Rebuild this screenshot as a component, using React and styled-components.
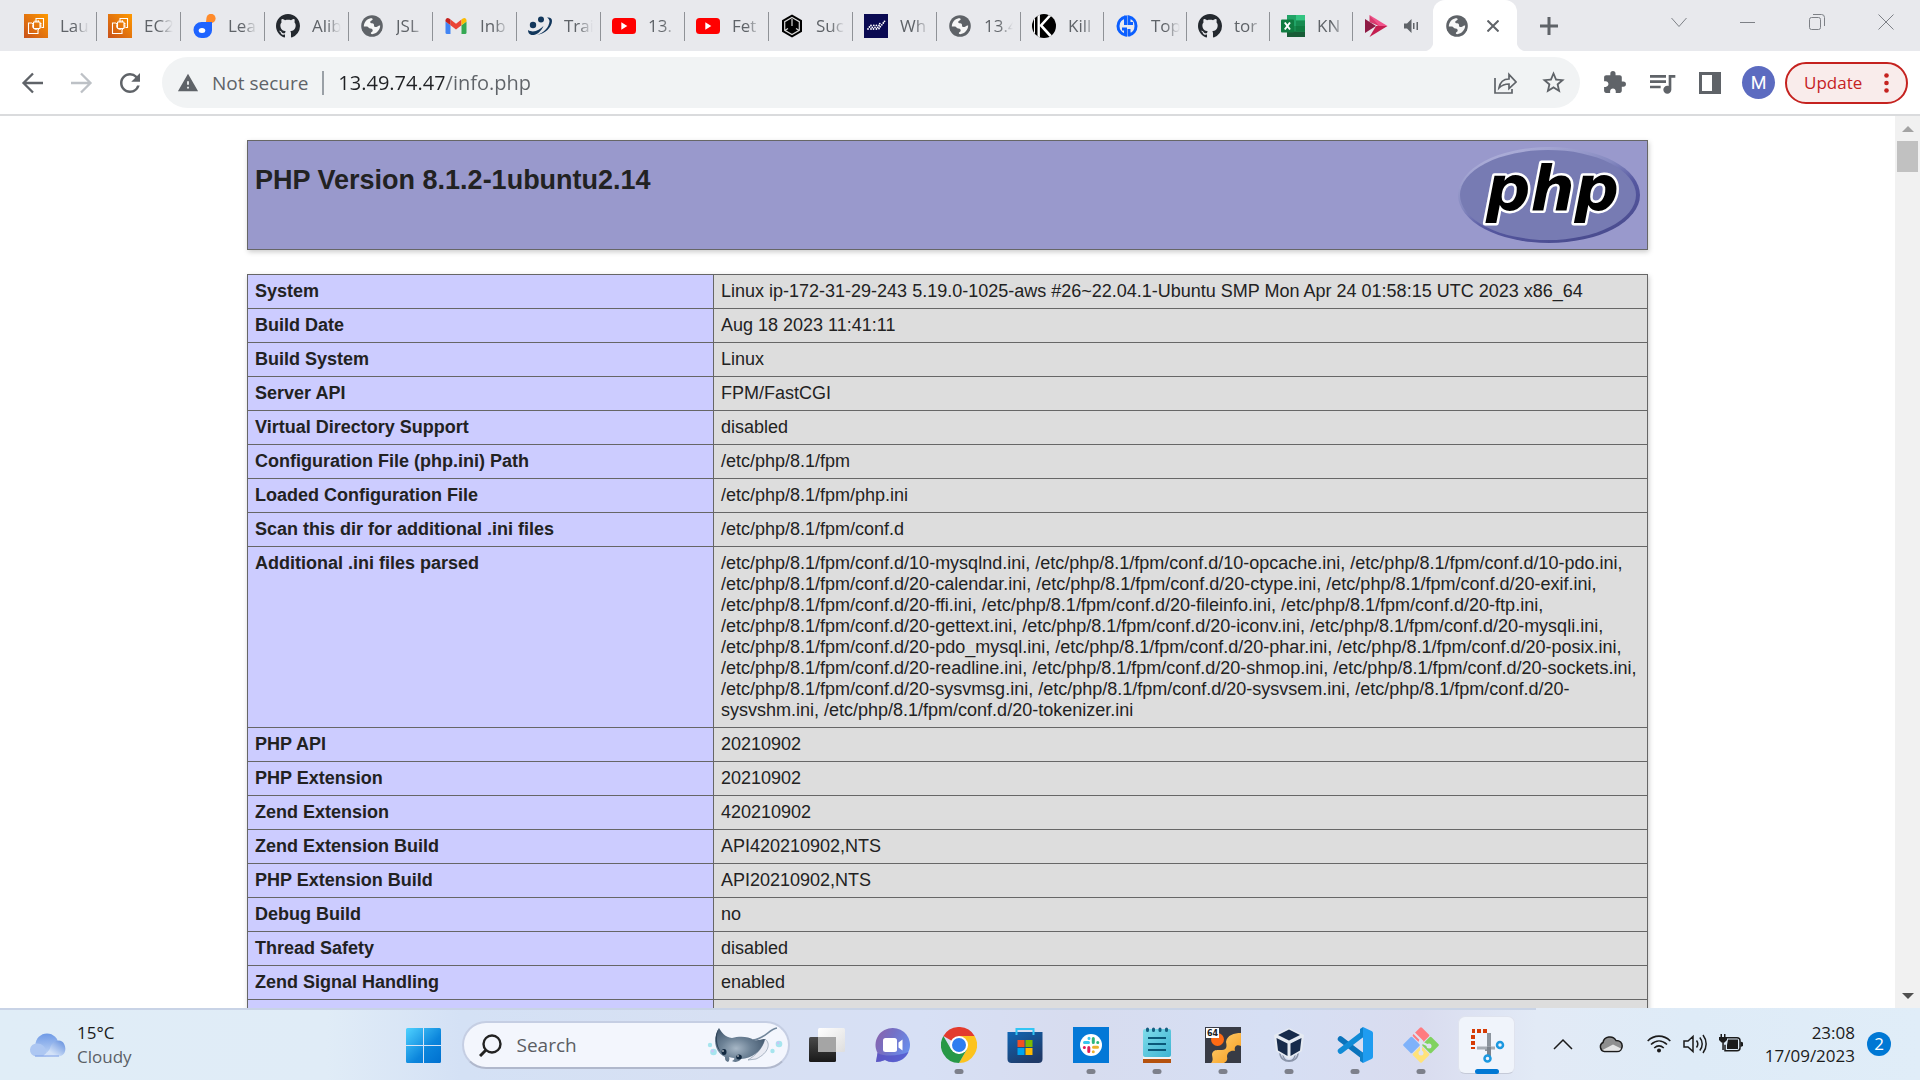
import React from "react";
import styled, { createGlobalStyle } from "styled-components";
import { MdExtension, MdStarBorder, MdQueueMusic, MdRefresh, MdWarning } from "react-icons/md";

const uiFont = `"Open Sans", "Noto Sans", sans-serif`;

const GlobalStyle = createGlobalStyle`
  *, *::before, *::after { box-sizing: border-box; }
  html, body { margin: 0; height: 100%; overflow: hidden; background: #fff; }
  button, input { font: inherit; color: inherit; background: none; border: 0; padding: 0; margin: 0; }
  svg { display: block; flex: none; }
`;

const Screen = styled.div`
  display: flex;
  flex-direction: column;
  height: 100vh;
  font-family: ${uiFont};
`;

/* ---------- tab strip ---------- */
const TabStrip = styled.nav`
  display: flex;
  flex: none;
  height: 51px;
  padding-left: 13px;
  background: #e8e9ed;
`;
const Tab = styled.button`
  display: flex;
  flex: none;
  align-items: center;
  width: ${(p) => p.$width}px;
  height: 51px;
  padding-left: 11px;
  gap: ${(p) => p.$gap || 12}px;
  color: #5f6368;
  font-size: 17px;
  line-height: 24px;
  text-align: left;
  background: linear-gradient(#8f9297, #8f9297) right 0 top 12px / 1px 29px no-repeat;
  ${(p) => p.$last && "background: none;"}
`;
const TabTitle = styled.span`
  width: 29px;
  overflow: hidden;
  white-space: nowrap;
  mask-image: linear-gradient(90deg, #000 50%, transparent 100%);
`;
const ActiveTab = styled.div`
  position: relative;
  display: flex;
  flex: none;
  align-items: center;
  gap: 14px;
  width: 84px;
  padding-left: 12px;
  border-radius: 12px 12px 0 0;
  background: #fff;
  &::before, &::after {
    content: "";
    position: absolute;
    bottom: 0;
    width: 10px;
    height: 10px;
  }
  &::before { right: 100%; background: radial-gradient(circle at 0 0, transparent 10px, #fff 11px); }
  &::after { left: 100%; background: radial-gradient(circle at 100% 0, transparent 10px, #fff 11px); }
`;
const PlainButton = styled.button`
  display: flex;
  flex: none;
  align-items: center;
  justify-content: center;
  width: ${(p) => p.$w || 24}px;
  height: ${(p) => p.$h || 24}px;
  color: ${(p) => p.$color || "#5f6368"};
`;
const NewTab = styled(PlainButton)`
  margin-left: 16px;
  align-self: center;
`;
const WindowControls = styled.div`
  display: flex;
  margin-left: auto;
`;

/* ---------- toolbar ---------- */
const Toolbar = styled.header`
  display: flex;
  flex: none;
  align-items: center;
  height: 65px;
  padding: 0 12px 0 9px;
  background: #fff;
  border-bottom: 2px solid #dadbdd;
`;
const AddressBar = styled.form`
  display: flex;
  flex: 1;
  align-items: center;
  min-width: 0;
  height: 51px;
  margin-left: 8px;
  padding: 0 15px 0 15px;
  border-radius: 26px;
  background: #f1f3f4;
  color: #5f6368;
  font-size: 19px;
`;
const Security = styled.button`
  display: flex;
  flex: none;
  align-items: center;
  gap: 13px;
  height: 24px;
  line-height: 24px;
  padding-right: 14px;
  border-right: 2px solid #9aa0a6;
`;
const Url = styled.input`
  flex: 1;
  min-width: 0;
  height: 32px;
  margin-left: 14px;
  outline: none;
  color: transparent;
  font-size: 20px;
  background: linear-gradient(90deg, #202124 106px, #5f6368 106px);
  background-clip: text;
`;
const AddressActions = styled.div`
  display: flex;
  gap: 24px;
`;
const ToolbarActions = styled.div`
  display: flex;
  align-items: center;
  margin-left: 22px;
  gap: 24px;
`;
const Avatar = styled.button`
  width: 33px;
  height: 33px;
  margin-left: -4px;
  border-radius: 50%;
  background: #5c6bc0;
  color: #fff;
  font-family: Roboto, sans-serif;
  font-size: 18px;
  line-height: 33px;
`;
const UpdateButton = styled.button`
  display: flex;
  align-items: center;
  justify-content: space-between;
  width: 123px;
  height: 42px;
  margin-left: -14px;
  padding: 0 17px;
  border: 2px solid #c5221f;
  border-radius: 21px;
  background: #f9eceb;
  color: #c5221f;
  font-size: 17px;
`;

/* ---------- page ---------- */
const Viewport = styled.div`
  display: flex;
  flex: 1;
  min-height: 0;
`;
const Page = styled.main`
  flex: 1;
  min-width: 0;
  overflow: hidden;
  padding-top: 24px;
  color: #222;
  font-family: "Liberation Sans", Arial, sans-serif;
  font-size: 18px;
  line-height: 21px;
`;
const Banner = styled.div`
  display: flex;
  justify-content: space-between;
  max-width: 1401px;
  height: 110px;
  margin: 0 auto 24px;
  padding: 6px 7px;
  border: 1px solid #666;
  background: #9999cc;
  box-shadow: 1px 2px 5px #ccc;
`;
const Title = styled.h1`
  margin: 17px 0 0;
  font-size: 27px;
  line-height: 32px;
`;
const InfoTable = styled.table`
  width: 1401px;
  max-width: 100%;
  margin: 0 auto;
  border-collapse: collapse;
  table-layout: fixed;
  box-shadow: 1px 2px 5px #ccc;
`;
const LabelCell = styled.th`
  width: 466px;
  padding: 6px 7px;
  border: 1px solid #666;
  background: #ccccff;
  text-align: left;
  vertical-align: top;
`;
const ValueCell = styled.td`
  padding: 6px 7px;
  border: 1px solid #666;
  background: #ddd;
  vertical-align: top;
`;
const Scrollbar = styled.div`
  display: flex;
  flex: none;
  flex-direction: column;
  align-items: center;
  width: 25px;
  background: #f1f1f1;
`;
const Thumb = styled.div`
  width: 21px;
  height: 31px;
  margin-bottom: auto;
  background: #c1c1c1;
`;

/* ---------- taskbar ---------- */
const Taskbar = styled.footer`
  display: grid;
  grid-template-columns: minmax(0, 1fr) auto minmax(0, 1fr);
  flex: none;
  height: 72px;
  background:
    linear-gradient(#c8d3e6, #c8d3e6) 0 0 / 80% 2px no-repeat,
    linear-gradient(90deg, #e0edf7 0%, #e0ecf7 17%, #d4e1f5 24%, #d7e0f3 38%, #d7e0f5 48%, #d7dcef 56%, #d6dff4 66%, #d9dcef 74%, #e2eaf6 80%, #deebf7 88%, #e0edf8 100%);
`;
const Weather = styled.button`
  display: flex;
  align-items: center;
  gap: 11px;
  padding: 2px 0 0 29px;
  text-align: left;
  font-size: 17px;
  line-height: 24px;
  color: #1b1b1b;
`;
const Muted = styled.span`
  display: block;
  color: #5b5f66;
`;
const Center = styled.div`
  display: flex;
  align-items: center;
  padding-top: 2px;
`;
const SearchBox = styled.label`
  display: flex;
  align-items: center;
  width: 328px;
  height: 48px;
  margin: 0 4px 0 15px;
  padding: 0 5px 0 15px;
  border: 2px solid #c5cee3;
  border-bottom-color: #b0b8cc;
  border-radius: 24px;
  background: #f3f6fd;
`;
const SearchInput = styled.input`
  flex: 1;
  min-width: 0;
  margin-left: 15px;
  outline: none;
  font-size: 19px;
  &::placeholder { color: #5b5d63; opacity: 1; }
`;
const AppCell = styled.button`
  position: relative;
  display: flex;
  align-items: center;
  justify-content: center;
  width: 66px;
  height: 58px;
`;
const ActiveTile = styled.span`
  display: flex;
  align-items: center;
  justify-content: center;
  width: 57px;
  height: 58px;
  border: 1px solid #dfe3ee;
  border-bottom-color: #c5cad8;
  border-radius: 7px;
  background: #f0f4fb;
`;
const Indicator = styled.span`
  position: absolute;
  bottom: 0;
  left: 50%;
  width: ${(p) => (p.$active ? 24 : 9)}px;
  height: 5px;
  border-radius: 3px;
  transform: translateX(-50%);
  background: ${(p) => (p.$active ? "#0078d4" : "#7d808b")};
`;
const Tray = styled.div`
  display: flex;
  align-items: center;
  justify-content: flex-end;
  gap: 12px;
  padding-right: 29px;
  color: #1b1b1b;
`;
const TrayGroup = styled.div`
  display: flex;
  gap: 24px;
  margin-right: 12px;
`;
const Clock = styled.time`
  margin-left: 10px;
  text-align: right;
  white-space: nowrap;
  font-size: 17px;
  line-height: 23px;
`;
const ClockLine = styled.span`
  display: block;
`;
const Badge = styled.button`
  width: 24px;
  height: 24px;
  border-radius: 50%;
  background: #0078d4;
  color: #fff;
  font-size: 17px;
  line-height: 24px;
`;

/* ---------- drawings ---------- */
const Svg = ({ size = 24, w, h, box = "0 0 24 24", children, ...rest }) => (
  <svg width={w || size} height={h || size} viewBox={box} fill="none" aria-hidden="true" {...rest}>{children}</svg>
);

const AwsIcon = () => (
  <Svg>
    <defs><linearGradient id="aws" x1="0" y1="1" x2="1" y2="0"><stop stopColor="#c8511b" /><stop offset="1" stopColor="#ff9900" /></linearGradient></defs>
    <path fill="url(#aws)" d="M0 0h24v24H0z" />
    <g stroke="#fff" strokeWidth="1.100">
      <rect x="9.500" y="8" width="6.500" height="6.500" rx=".5" />
      <path d="M11.200 8V6.300M12.800 8V6.300M14.400 8V6.300M11.200 14.500v1.500M12.800 14.500v1.500M14.400 14.500v1.500M9.500 9.600H8M9.500 11.200H8M9.500 12.900H8M16 9.600h1.500M16 11.200h1.500M16 12.900h1.500" />
      <path d="M12 6.500V4.500h7.500v9H17.500M8 9H4.500v10.500h9.500V16" />
    </g>
  </Svg>
);
const LeafIcon = () => (
  <Svg>
    <circle cx="19" cy="4.400" r="4.600" fill="#ff8b2b" />
    <path fill="#ff8b2b" d="M14.500 5l-.8 4.200 5-.4z" />
    <path fill="#1f64ff" d="M9.500 8H20v8.500a8 7.500 0 0 1-8 7.500H9.500a8 8 0 1 1 0-16z" />
    <ellipse cx="10" cy="16.500" rx="3.300" ry="2.500" fill="#fff" />
  </Svg>
);
const GithubIcon = () => (
  <Svg box="0 0 16 16"><path fill="#24292f" d="M8 0C3.580 0 0 3.580 0 8c0 3.540 2.290 6.530 5.470 7.590.4.070.55-.17.55-.38 0-.19-.01-.82-.01-1.490-2.010.37-2.530-.49-2.690-.94-.09-.23-.48-.94-.82-1.130-.28-.15-.68-.52-.01-.53.63-.01 1.080.58 1.230.82.72 1.210 1.870.87 2.330.66.07-.52.28-.87.51-1.070-1.780-.2-3.640-.89-3.640-3.950 0-.87.31-1.590.82-2.150-.08-.2-.36-1.020.08-2.120 0 0 .67-.21 2.200.82.64-.18 1.320-.27 2-.27.68 0 1.360.09 2 .27 1.530-1.040 2.200-.82 2.200-.82.44 1.100.16 1.920.08 2.120.51.56.82 1.270.82 2.150 0 3.070-1.870 3.750-3.650 3.950.29.25.54.73.54 1.480 0 1.070-.01 1.930-.01 2.200 0 .21.15.46.55.38A8.013 8.013 0 0 0 16 8c0-4.420-3.580-8-8-8z" /></Svg>
);
const GlobeIcon = () => (
  <Svg>
    <circle cx="12" cy="12" r="10.800" fill="#5f6368" />
    <path fill="#fff" d="M3.800 12.500C4 8 6.800 5 10.500 4.200c1.500-.2 2.700.3 2 1.600-.5 1-2.300 1-2.300 2.300 0 1 .7 1.200 1.800 1.200 1.800 0 2 1 2 2.200 0 1.300 1 1.700 2.300 1.500 1.200-.3 1.900-1.500 3.200-1.500h.7c-.2 4.500-3.500 8.200-8 8.700-1 0-1.700-.6-1.200-1.600.5-.8 1.700-1 1.700-2.200 0-1.600-1.100-2-2.700-2-1.500 0-1.500-1.900-3.200-1.900z" opacity=".95" />
  </Svg>
);
const GmailIcon = () => (
  <Svg>
    <path fill="#4285f4" d="M1.500 7.500l5 3.800V20H3a1.500 1.500 0 0 1-1.500-1.500z" />
    <path fill="#34a853" d="M22.500 7.500l-5 3.800V20H21a1.500 1.500 0 0 0 1.500-1.500z" />
    <path fill="#ea4335" d="M6.500 5.500L12 9.700l5.500-4.200v5.800L12 15.500l-5.500-4.200z" />
    <path fill="#c5221f" d="M1.500 6.500c0-2.200 2-3.200 3.700-2l1.300 1v5.800l-5-3.800z" />
    <path fill="#fbbc04" d="M22.500 6.500c0-2.200-2-3.200-3.700-2l-1.300 1v5.800l5-3.800z" />
  </Svg>
);
const PeopleIcon = () => (
  <Svg fill="#12375c">
    <circle cx="5" cy="11" r="3.200" /><circle cx="13" cy="5.500" r="3" />
    <path d="M0 16c5.500 3.500 11.500 0 15.500-4-2.500 6-7.500 9.500-12 9C1 20.500 0 18.500 0 16zM9 21c7-2 12-8 12.500-13.500 0-2-1-3-2.500-4 3.500-.5 5 1 5 3.500 0 6-7 13-15 14z" />
  </Svg>
);
const YoutubeIcon = () => (
  <Svg><rect y="4" width="24" height="16" rx="3.500" fill="#f00" /><path fill="#fff" d="M9.300 8.300v7.400l6-3.700z" /></Svg>
);
const HexIcon = () => (
  <Svg>
    <path fill="#000" d="M12 .5l10 5.700v11.600L12 23.500 2 17.800V6.200z" />
    <path stroke="#d8d8d8" strokeWidth="1.200" d="M12 3.500l7.300 4.200v8.600L12 20.500l-7.300-4.200V7.700zM12 5v7M5.500 16l2.500-1.500M18.500 16L16 14.500" />
  </Svg>
);
const WaveIcon = () => (
  <Svg>
    <path fill="#0a0a52" d="M0 0h24v24H0z" />
    <g fill="#fff">
      {[[4, 15], [5.500, 13], [7, 11.500], [8.300, 13.300], [7, 15], [9.500, 15], [11, 13.300], [9.800, 11.300], [12.400, 11.300], [13.600, 13.300], [12.400, 15], [15, 14.500], [15, 11.500], [16.300, 12.700], [15.800, 9.600], [17.800, 10.800], [19.300, 9], [20.500, 7.300]].map(([x, y]) => <circle key={`${x}-${y}`} cx={x} cy={y} r=".9" />)}
    </g>
  </Svg>
);
const KIcon = () => (
  <Svg>
    <defs><clipPath id="kc"><circle cx="12" cy="12" r="12" /></clipPath></defs>
    <g clipPath="url(#kc)"><path fill="#000" d="M0 0h24v24H0z" /><path stroke="#fff" strokeWidth="2.600" d="M18.500 1L9 11.500 19.500 23" /><path stroke="#fff" strokeWidth="2.400" d="M6.700 0v24" /><path stroke="#fff" strokeWidth="1" d="M2.500 4v16" /></g>
  </Svg>
);
const GdIcon = () => (
  <Svg stroke="#0b5fff" strokeWidth="3">
    <path d="M10.500 1.500v9.500M10.500 3A9.200 9.200 0 0 0 3 12a9 9 0 0 0 7.500 9v-6H7" />
    <path d="M14 22.500V15M14 21a9.200 9.200 0 0 0 7-9 9 9 0 0 0-7-9v6.500h4" />
  </Svg>
);
const ExcelIcon = () => (
  <Svg>
    <path fill="#21a366" d="M6 1h18v22H6z" /><path fill="#33c481" d="M15 1h9v5.500h-9z" /><path fill="#107c41" d="M6 12h9v5.500H6zM15 6.500h9V12h-9z" opacity=".6" /><path fill="#185c37" d="M6 17.500h18V23H6z" /><path fill="#107c41" d="M15 12h9v5.500h-9z" />
    <rect y="5.500" width="13" height="13" rx="1" fill="#107c41" /><path stroke="#fff" strokeWidth="2" d="M3.800 8.500l5.200 7M9 8.500l-5.200 7" />
  </Svg>
);
const StreamIcon = () => (
  <Svg><path fill="#f0528a" d="M5.500 1l18 11H14z" /><path fill="#d7275f" d="M5.500 1L15 12 5.500 8z" opacity=".9" /><path fill="#c41e50" d="M5.500 23l18-11H12z" /><path fill="#8e1a44" d="M1 5l11 7L1 19z" /></Svg>
);
const AudioIcon = () => (
  <Svg w={15} h={14} box="0 0 15 14" fill="#5f6368"><path d="M0 4.500h3L7.500 0v14L3 9.500H0zM9 4h1.500v6H9zM12.500 3H14v8h-1.500z" /></Svg>
);
const Lines = ({ d, size, w, sw = 2, box, ...r }) => (
  <Svg size={size} w={w} box={box} stroke="currentColor" strokeWidth={sw} {...r}><path d={d} /></Svg>
);

const PhpLogo = () => (
  <Svg w={182} h={96} box="0 0 182 96">
    <defs>
      <linearGradient id="rim" x1=".2" y1="0" x2=".8" y2="1"><stop stopColor="#b3b4dc" /><stop offset=".4" stopColor="#8488bf" /><stop offset=".6" stopColor="#5557a0" /><stop offset="1" stopColor="#484a8c" /></linearGradient>
    </defs>
    <ellipse cx="91" cy="48" rx="91" ry="48" fill="url(#rim)" />
    <ellipse cx="90" cy="48" rx="88" ry="45" fill="#777bb3" />
    <text x="28" y="63" fontFamily="DejaVu Sans, sans-serif" fontWeight="700" fontStyle="italic" fontSize="62" fill="#000" stroke="#fff" strokeWidth="5" strokeLinejoin="round" paintOrder="stroke">php</text>
  </Svg>
);

const CloudIcon = () => (
  <Svg w={37} h={24} box="0 0 37 24">
    <defs>
      <linearGradient id="cl1" x1="0" y1="0" x2="0" y2="1"><stop stopColor="#6f9ae6" /><stop offset="1" stopColor="#c5d9f6" /></linearGradient>
      <linearGradient id="cl2" x1="1" y1="0" x2="0" y2="1"><stop stopColor="#5f8cdd" /><stop offset=".7" stopColor="#d3e2f8" /></linearGradient>
    </defs>
    <circle cx="18" cy="12" r="11.500" fill="url(#cl1)" />
    <path fill="#adc7f2" d="M8 10.500c5 0 8 3 9 7v6H7a6.500 6.500 0 0 1 1-13z" />
    <path fill="url(#cl2)" d="M14 23.500c2-3 5-4 7-8 2-7 8-9.500 12-7 5 3.500 5 15-4 15z" />
    <path stroke="#7fa0e8" d="M6 23h24" />
  </Svg>
);
const WindowsIcon = () => (
  <Svg size={35} box="0 0 35 35">
    <defs><linearGradient id="win" x1="0" y1="0" x2="1" y2="1"><stop stopColor="#4fd2ff" /><stop offset=".6" stopColor="#0b85dc" /><stop offset="1" stopColor="#0070cf" /></linearGradient></defs>
    <path fill="url(#win)" d="M1.500 0H17v17H0V1.500A1.500 1.500 0 0 1 1.500 0zM18 0h15.500A1.500 1.500 0 0 1 35 1.500V17H18zM0 18h17v17H1.500A1.500 1.500 0 0 1 0 33.500zM18 18h17v15.500a1.500 1.500 0 0 1-1.500 1.500H18z" />
  </Svg>
);
const MantaIcon = () => (
  <Svg w={76} h={38} box="0 0 76 38">
    <defs>
      <radialGradient id="manta" cx=".42" cy=".6" r=".6"><stop stopColor="#a7b7c6" /><stop offset=".5" stopColor="#6d8296" /><stop offset="1" stopColor="#475c72" /></radialGradient>
    </defs>
    <path stroke="#71869b" strokeWidth="1.500" d="M70 2c-8 1-12 11-24 12" />
    <path fill="#e9ebf3" stroke="#7b8ca0" strokeWidth=".6" d="M58 13c6 4 4 14-9 20l-8 1c8-5 14-11 17-21z" />
    <path fill="url(#manta)" d="M12 2c3 5 6 9 13 10 7-2 16-2 22 2 4 1 8-1 11-1-3 12-12 19-24 20-3 4-8 3-9 2 2-1 3-2 2-3-3 0-4-1-5-1 1 2 0 4-1 5-3-1-3-3-3-5C8 26 5 14 12 2z" />
    <path fill="#2f4459" d="M12 2C9 9 9 19 14 26 9 22 6 10 12 2z" />
    <ellipse cx="17" cy="26" rx="2.500" ry="3" fill="#12283f" /><ellipse cx="32" cy="31" rx="2.800" ry="2.500" fill="#12283f" />
    <circle cx="16" cy="25" r=".8" fill="#fff" /><circle cx="31" cy="30" r=".8" fill="#fff" />
    <g fill="#a6e5ee"><circle cx="3" cy="19" r="2.200" /><circle cx="6.500" cy="26" r="3.300" /><circle cx="72" cy="18" r="3.300" /><circle cx="65.500" cy="25" r="2.200" /></g>
    <g fill="#c9c5f6"><circle cx="71" cy="17" r="1.400" /><circle cx="5.500" cy="25" r="1.400" /></g>
  </Svg>
);
const TaskViewIcon = () => (
  <Svg size={36} box="0 0 36 36">
    <defs>
      <linearGradient id="tv" x1="0" y1="0" x2="0" y2="1"><stop stopColor="#4a4a4a" /><stop offset="1" stopColor="#191919" /></linearGradient>
      <linearGradient id="tv2" x1="0" y1="0" x2="1" y2="1"><stop stopColor="#fff" /><stop offset="1" stopColor="#dedede" /></linearGradient>
    </defs>
    <rect y="10" width="27" height="25" rx="1.500" fill="url(#tv)" /><rect x="9" y="1" width="27" height="24" rx="1.500" fill="url(#tv2)" /><path fill="#a5a5a5" d="M9 10h18v15H10.500A1.500 1.500 0 0 1 9 23.500z" />
  </Svg>
);
const ChatIcon = () => (
  <Svg size={36} box="0 0 36 36">
    <defs><linearGradient id="chat" x1="0" y1="0" x2="1" y2=".5"><stop stopColor="#8d62a8" /><stop offset=".5" stopColor="#7371c7" /><stop offset="1" stopColor="#6b8dea" /></linearGradient></defs>
    <path fill="url(#chat)" d="M18 1a17 17 0 1 1-8 32c-3 1-6 2-9 2l1.500-9A17 17 0 0 1 18 1z" />
    <path fill="#514fc6" opacity=".7" d="M2.500 26c7 4 22 3 31-1-4 9-15 13-23.500 8-3 1-6 2-9 2z" />
    <rect x="8" y="11" width="14" height="14" rx="2.500" fill="#fff" /><path fill="#fff" d="M23.500 15.500l4-3v11l-4-3z" />
  </Svg>
);
const ChromeIcon = () => (
  <Svg size={36} box="0 0 36 36">
    <path fill="#e33b2e" d="M18 18L2.400 9A18 18 0 0 1 33.600 9z" />
    <path fill="#fcc31e" d="M18 9h15.600A18 18 0 0 1 18 36l7.800-13.500z" />
    <path fill="#279847" d="M2.400 9l7.800 13.500L18 27l7.800-4.500L18 36A18 18 0 0 1 2.400 9z" />
    <circle cx="18" cy="18" r="9" fill="#fff" /><circle cx="18" cy="18" r="7" fill="#2f7df0" />
  </Svg>
);
const StoreIcon = () => (
  <Svg size={36} box="0 0 36 36">
    <defs><linearGradient id="store" x1="0" y1="0" x2=".6" y2="1"><stop stopColor="#0f66b5" /><stop offset="1" stopColor="#1f3a68" /></linearGradient></defs>
    <path stroke="#31c5f4" strokeWidth="2" d="M9.500 8V2h17v6" />
    <path fill="url(#store)" d="M.5 5h35v27a4 4 0 0 1-4 4h-27a4 4 0 0 1-4-4z" />
    <path stroke="#31c5f4" strokeWidth="2" d="M9.500 8V5M26.500 8V5" />
    <path fill="#f25022" d="M10.500 13h7v7h-7z" /><path fill="#7fba00" d="M18.500 13h7v7h-7z" /><path fill="#00a4ef" d="M10.500 21h7v7h-7z" /><path fill="#ffb900" d="M18.500 21h7v7h-7z" />
  </Svg>
);
const SlackIcon = () => (
  <Svg size={36} box="0 0 36 36">
    <path fill="#0378d7" d="M0 0h36v36H0z" /><circle cx="18" cy="18" r="11" fill="#fff" />
    <g strokeWidth="3" strokeLinecap="round">
      <path stroke="#36c5f0" d="M11.500 15.500h4M16 11.300v.2" /><path stroke="#2eb67d" d="M20.300 11.500v4M24.800 15.500h-.1" /><path stroke="#ecb22e" d="M20.500 20.300h4M20.300 24.800v-.1" /><path stroke="#e01e5a" d="M15.800 20.500v4M11.300 20.500h.1" />
    </g>
  </Svg>
);
const NotepadIcon = () => (
  <Svg size={36} box="0 0 36 36">
    <defs><linearGradient id="note" x1="0" y1="0" x2="1" y2="1"><stop stopColor="#7fdcea" /><stop offset="1" stopColor="#3db4d2" /></linearGradient></defs>
    <path fill="#b5520f" d="M4 31h28v5H4z" /><path fill="#f3f3f3" d="M4 29h28v3H4z" /><rect x="4" y="2" width="28" height="28" rx="2" fill="url(#note)" />
    <path stroke="#0a5878" strokeWidth="2" d="M9 11h18M9 17h18M9 23h18" /><path stroke="#155e80" strokeWidth="3" strokeLinecap="round" d="M8.500 2v1.500M14.500 2v1.500M21 2v1.500M27.500 2v1.500" />
  </Svg>
);
const ToolIcon = () => (
  <Svg size={36} box="0 0 36 36">
    <defs><linearGradient id="tool" x1="0" y1="0" x2="1" y2="1"><stop stopColor="#ffd479" /><stop offset="1" stopColor="#f79a1a" /></linearGradient></defs>
    <path fill="#383b45" d="M0 0h36v36H0z" /><circle cx="12.500" cy="12.500" r="6.500" fill="#ff6a13" />
    <path fill="url(#tool)" d="M36 6v13c-5-2-7 1-6 5-4-1-8 1-8 6 1 3-1 5-3 6H6c3-3 1-6 1-9 1-5 6-4 10-4 5 0 5-4 4-8 1-7 8-9 15-9z" />
    <path fill="#fff" d="M1 1h13v10H1z" /><text x="2" y="9" fontFamily="DejaVu Sans, sans-serif" fontWeight="700" fontSize="8" fill="#222">64</text>
  </Svg>
);
const VboxIcon = () => (
  <Svg size={36} box="0 0 36 36">
    <path stroke="#8a94a9" strokeWidth="1.500" d="M9 26c0 11 18 11 18 0M12 27c0 9 12 9 12 0" />
    <path fill="#e5eaf2" d="M18 1l15 7-2 16-13 8-13-8L3 8z" /><path fill="#172b4b" d="M18 2.500l11 5.500-11 5.500L7 8zM5.500 11L16.500 16.500V29L7 23.500zM30.500 11L19.500 16.500V29L29 23.500z" />
  </Svg>
);
const CodeIcon = () => (
  <Svg size={36} box="0 0 36 36">
    <path stroke="#0b73bb" strokeWidth="5.500" strokeLinecap="round" d="M3.500 12L27 30" /><path stroke="#118bd6" strokeWidth="5.500" strokeLinecap="round" d="M3.500 24L27 6" /><path fill="#1f9cf0" d="M26 0l8.500 4A2.500 2.500 0 0 1 36 6.500v23a2.500 2.500 0 0 1-1.500 2.500L26 36z" /><path fill="#0e82cc" d="M26 0v10l-3 2V2zM26 36V26l-3-2v10z" />
  </Svg>
);
const GitIcon = () => (
  <Svg size={36} box="0 0 36 36">
    <g transform="rotate(45 18 18)"><rect x="5" y="5" width="12.500" height="12.500" rx="1.500" fill="#ff7b80" /><rect x="18.500" y="5" width="12.500" height="12.500" rx="1.500" fill="#80d25f" /><rect x="5" y="18.500" width="12.500" height="12.500" rx="1.500" fill="#7fb2fa" /><rect x="18.500" y="18.500" width="12.500" height="12.500" rx="1.500" fill="#ffe27a" /></g>
    <path stroke="#dfe3f3" strokeWidth="2" d="M11 6l7 7v13M18 15l8 4" /><circle cx="18" cy="15" r="2.500" fill="#dfe3f3" /><circle cx="26" cy="19" r="2.500" fill="#dfe3f3" /><circle cx="18" cy="26" r="2.500" fill="#dfe3f3" />
  </Svg>
);
const SnipIcon = () => (
  <Svg size={36} box="0 0 36 36">
    <path stroke="#d63b05" strokeWidth="4" strokeDasharray="4 2" d="M18 4H3M4 8v14" />
    <path stroke="#8d959e" strokeWidth="4" d="M20 6v16h-4" /><path stroke="#a5abb3" strokeWidth="3" d="M8 21h18" /><path stroke="#7b838d" strokeWidth="4" d="M20 20v9" />
    <circle cx="31" cy="18" r="3" stroke="#1b98e0" strokeWidth="2.500" /><circle cx="18.500" cy="31.500" r="3" stroke="#1b98e0" strokeWidth="2.500" />
  </Svg>
);
const OneDriveIcon = () => (
  <Svg stroke="#1b1b1b" strokeWidth="1.500"><path fill="#8f8f8f" d="M5.500 19.500A4.800 4.800 0 0 1 4 10.500C5 4 14 3 17 8.500c4 0 6.200 2.500 6.200 5.500s-2.200 5.500-5.200 5.500z" /><path fill="#e4e4e4" stroke="none" d="M3.500 18L14 12.500l8 4c-1 2-2 2.300-4 2.300H5.500z" /></Svg>
);
const WifiIcon = () => (
  <Svg stroke="currentColor" strokeWidth="1.600"><path d="M.7 9c6.500-6.500 16-6.500 22.600 0M4 12.500c5-4.700 11-4.700 16 0M7.200 16c3-2.700 6.600-2.700 9.600 0" /><circle cx="12" cy="18.500" r="1.200" fill="currentColor" /></Svg>
);
const SpeakerIcon = () => (
  <Svg stroke="currentColor" strokeWidth="1.500"><path d="M1 9h4l5-4.500v15L5 15H1zM13.500 8.500c1.500 2 1.500 5 0 7M16.800 5.500c3.200 3.800 3.200 9.200 0 13M20 3c4.200 5.500 4.200 12.500 0 18" /></Svg>
);
const BatteryIcon = () => (
  <Svg><path stroke="currentColor" strokeWidth="1.500" d="M8 5.700h10a3 3 0 0 1 3 3v7a3 3 0 0 1-3 3H6v-6" /><path fill="currentColor" d="M9 7.500h10v9.500H8v-4zM21.500 9.500l2.500 1v3.500l-2.500 1zM0 5h8v3L5.500 10.500h-3L0 8zM1.500 2H3v4H1.500zM5 2h1.500v4H5zM3.300 10h1.500v8H3.300z" /></Svg>
);

/* ---------- data ---------- */
const tabs = [
  ["Lau", AwsIcon], ["EC2", AwsIcon], ["Lea", LeafIcon], ["Alib", GithubIcon], ["JSL", GlobeIcon], ["Inb", GmailIcon],
  ["Trai", PeopleIcon], ["13.", YoutubeIcon], ["Fet", YoutubeIcon], ["Suc", HexIcon], ["Wh", WaveIcon], ["13.4", GlobeIcon],
  ["Kill", KIcon], ["Top", GdIcon], ["tor", GithubIcon], ["KN", ExcelIcon],
];
const conf = "/etc/php/8.1/fpm/conf.d/";
const iniFiles = ["10-mysqlnd", "10-opcache", "10-pdo", "20-calendar", "20-ctype", "20-exif", "20-ffi", "20-fileinfo", "20-ftp", "20-gettext", "20-iconv", "20-mysqli", "20-pdo_mysql", "20-phar", "20-posix", "20-readline", "20-shmop", "20-sockets", "20-sysvmsg", "20-sysvsem", "20-sysvshm", "20-tokenizer"]
  .map((n) => `${conf}${n}.ini`).join(", ");
const info = [
  ["System", "Linux ip-172-31-29-243 5.19.0-1025-aws #26~22.04.1-Ubuntu SMP Mon Apr 24 01:58:15 UTC 2023 x86_64"],
  ["Build Date", "Aug 18 2023 11:41:11"],
  ["Build System", "Linux"],
  ["Server API", "FPM/FastCGI"],
  ["Virtual Directory Support", "disabled"],
  ["Configuration File (php.ini) Path", "/etc/php/8.1/fpm"],
  ["Loaded Configuration File", "/etc/php/8.1/fpm/php.ini"],
  ["Scan this dir for additional .ini files", "/etc/php/8.1/fpm/conf.d"],
  ["Additional .ini files parsed", iniFiles],
  ["PHP API", "20210902"],
  ["PHP Extension", "20210902"],
  ["Zend Extension", "420210902"],
  ["Zend Extension Build", "API420210902,NTS"],
  ["PHP Extension Build", "API20210902,NTS"],
  ["Debug Build", "no"],
  ["Thread Safety", "disabled"],
  ["Zend Signal Handling", "enabled"],
  ["\u00a0", "\u00a0"],
];
const apps = [
  ["Task view", TaskViewIcon, false], ["Chat", ChatIcon, false], ["Chrome", ChromeIcon, true], ["Store", StoreIcon, false],
  ["Slack", SlackIcon, true], ["Notepad", NotepadIcon, true], ["Editor", ToolIcon, true], ["VirtualBox", VboxIcon, true],
  ["Code", CodeIcon, true], ["Git", GitIcon, true],
];

export default function App() {
  return (
    <Screen>
      <GlobalStyle />
      <TabStrip aria-label="Tabs">
        {tabs.map(([title, Icon], i) => (
          <Tab key={i} $width={i < 12 ? 84 : 83}>
            <Icon />
            <TabTitle>{title}</TabTitle>
          </Tab>
        ))}
        <Tab $width={80} $gap={16} $last aria-label="Stream"><StreamIcon /><AudioIcon /></Tab>
        <ActiveTab>
          <GlobeIcon />
          <PlainButton $w={20} aria-label="Close tab"><Lines size={12} box="0 0 12 12" d="M.5.5l11 11M11.500.5l-11 11" /></PlainButton>
        </ActiveTab>
        <NewTab $w={32} $h={32} aria-label="New tab"><Lines size={18} box="0 0 18 18" sw={3} d="M9 0v18M0 9h18" /></NewTab>
        <WindowControls>
          <PlainButton $w={69} $h={43} $color="#7d8086" aria-label="Search tabs"><Lines size={16} box="0 0 16 16" sw={1} d="M.5 4l7.500 8.500L15.500 4" /></PlainButton>
          <PlainButton $w={69} $h={43} $color="#7d8086" aria-label="Minimize"><Lines size={16} box="0 0 16 16" sw={1} d="M0 8.500h15" /></PlainButton>
          <PlainButton $w={69} $h={43} $color="#7d8086" aria-label="Restore"><Lines size={16} box="0 0 16 16" sw={1} d="M2.500 3.500h7a2 2 0 0 1 2 2v8a2 2 0 0 1-2 2h-7a2 2 0 0 1-2-2v-8a2 2 0 0 1 2-2zM4 .5h8.500a3 3 0 0 1 3 3V12" /></PlainButton>
          <PlainButton $w={69} $h={43} $color="#7d8086" aria-label="Close"><Lines size={16} box="0 0 16 16" sw={1} d="M.5.5l15 15M15.500.5l-15 15" /></PlainButton>
        </WindowControls>
      </TabStrip>

      <Toolbar>
        <PlainButton $w={48} $h={48} aria-label="Back"><Lines d="M22 12H3M12 2.500L2.500 12l9.500 9.500" sw={2.300} /></PlainButton>
        <PlainButton $w={48} $h={48} $color="#bdc1c6" aria-label="Forward"><Lines d="M2 12h19M12 2.500l9.500 9.500-9.500 9.500" sw={2.300} /></PlainButton>
        <PlainButton $w={49} $h={48} aria-label="Reload"><MdRefresh size={30} /></PlainButton>
        <AddressBar>
          <Security type="button"><MdWarning size={22} />Not secure</Security>
          <Url aria-label="Address" defaultValue="13.49.74.47/info.php" spellCheck={false} />
          <AddressActions>
            <PlainButton type="button" aria-label="Share"><Lines d="M2 7v15h17v-4M6 17c1-6 5-9 10-9V3.500l7 7.500-7 6.500V13c-4 0-7 1-10 4z" sw={1.700} /></PlainButton>
            <PlainButton type="button" aria-label="Bookmark"><MdStarBorder size={27} /></PlainButton>
          </AddressActions>
        </AddressBar>
        <ToolbarActions>
          <PlainButton aria-label="Extensions"><MdExtension size={25} /></PlainButton>
          <PlainButton aria-label="Media"><MdQueueMusic size={32} /></PlainButton>
          <PlainButton aria-label="Side panel"><Svg size={22} box="0 0 22 22"><path stroke="currentColor" strokeWidth="3" d="M1.500 1.500h19v19h-19z" /><path fill="currentColor" d="M13 1h8v20h-8z" /></Svg></PlainButton>
          <Avatar aria-label="Profile">M</Avatar>
          <UpdateButton>Update<Svg w={5} h={20} box="0 0 5 20" fill="currentColor"><circle cx="2.500" cy="2.500" r="2.300" /><circle cx="2.500" cy="10" r="2.300" /><circle cx="2.500" cy="17.500" r="2.300" /></Svg></UpdateButton>
        </ToolbarActions>
      </Toolbar>

      <Viewport>
        <Page>
          <Banner><Title>PHP Version 8.1.2-1ubuntu2.14</Title><PhpLogo /></Banner>
          <InfoTable>
            <tbody>
              {info.map(([k, v]) => (
                <tr key={k}><LabelCell scope="row">{k}</LabelCell><ValueCell>{v}</ValueCell></tr>
              ))}
            </tbody>
          </InfoTable>
        </Page>
        <Scrollbar>
          <PlainButton $w={25} $h={25} $color="#a3a3a3" aria-label="Scroll up"><Svg w={12} h={6} box="0 0 12 6" fill="currentColor"><path d="M0 6l6-6 6 6z" /></Svg></PlainButton>
          <Thumb />
          <PlainButton $w={25} $h={25} $color="#505050" aria-label="Scroll down"><Svg w={12} h={6} box="0 0 12 6" fill="currentColor"><path d="M0 0l6 6 6-6z" /></Svg></PlainButton>
        </Scrollbar>
      </Viewport>

      <Taskbar>
        <Weather><CloudIcon /><span>15°C<Muted>Cloudy</Muted></span></Weather>
        <Center>
          <PlainButton $w={46} $h={58} aria-label="Start"><WindowsIcon /></PlainButton>
          <SearchBox>
            <Svg size={23} box="0 0 23 23" stroke="#222" strokeWidth="2.400"><circle cx="13" cy="10" r="8.500" /><path d="M7 16l-6 6" strokeWidth="3" /></Svg>
            <SearchInput placeholder="Search" aria-label="Search" />
            <MantaIcon />
          </SearchBox>
          {apps.map(([name, Icon, open]) => (
            <AppCell key={name} aria-label={name}><Icon />{open && <Indicator />}</AppCell>
          ))}
          <AppCell aria-label="Snipping tool"><ActiveTile><SnipIcon /></ActiveTile><Indicator $active /></AppCell>
        </Center>
        <Tray>
          <TrayGroup>
            <PlainButton $color="#1b1b1b" aria-label="Hidden icons"><Lines w={20} h={12} box="0 0 20 12" sw={1.500} d="M1 11l9-9 9 9" /></PlainButton>
            <PlainButton aria-label="OneDrive"><OneDriveIcon /></PlainButton>
          </TrayGroup>
          <WifiIcon /><SpeakerIcon /><BatteryIcon />
          <Clock dateTime="2023-09-17T23:08"><ClockLine>23:08</ClockLine><ClockLine>17/09/2023</ClockLine></Clock>
          <Badge aria-label="2 notifications">2</Badge>
        </Tray>
      </Taskbar>
    </Screen>
  );
}
